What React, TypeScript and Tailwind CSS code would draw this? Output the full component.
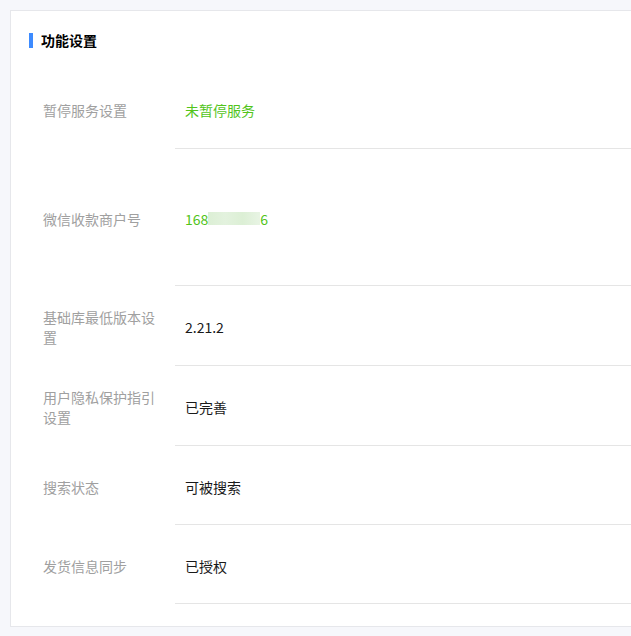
import React from "react";

type Row = {
  label: string;
  value: React.ReactNode;
  tall?: boolean;
  short?: boolean;
};

const rows: Row[] = [
  { label: "暂停服务设置", value: <span className="text-[#52c41a]">未暂停服务</span> },
  {
    label: "微信收款商户号",
    tall: true,
    value: (
      <span className="text-[#52c41a] flex items-center">
        168
        <span className="inline-block w-[52px] h-[13px] bg-[linear-gradient(90deg,#dcefd5,#e3f2de,#dcefd5,#e8f4e4)]" />
        6
      </span>
    ),
  },
  { label: "基础库最低版本设置", value: "2.21.2" },
  { label: "用户隐私保护指引设置", value: "已完善" },
  { label: "搜索状态", value: "可被搜索", short: true },
  { label: "发货信息同步", value: "已授权", short: true },
];

export default function App() {
  return (
    <div
      className="min-h-[636px] bg-[#f6f7fb] pt-[10px] pl-[10px] pb-[9px]"
      style={{ fontFamily: '"Microsoft YaHei", "Noto Sans CJK SC", sans-serif' }}
    >
      <div className="bg-white border-t border-l border-b border-[#e6e7eb] pl-[18px] pt-[21px] pb-[22px]">
        {/* title */}
        <div className="flex items-center h-[16px]">
          <span className="w-[4px] h-[15px] bg-[#3d8bff]" />
          <span className="ml-[8px] text-[14px] font-bold text-black leading-none">功能设置</span>
        </div>

        <div className="mt-[21px]">
          {rows.map((r) => (
            <div key={r.label} className="flex">
              <div className={`w-[146px] pl-[14px] shrink-0 pt-[21px] ${r.short ? "pb-[18px]" : "pb-[19px]"}`}>
                <div
                  className={`w-[120px] flex items-center text-[14px] leading-[20px] text-[#a0a0a0] ${
                    r.tall ? "min-h-[97px]" : "min-h-[40px]"
                  }`}
                >
                  {r.label}
                </div>
              </div>
              <div
                className={`flex-1 border-b border-[#e5e5e5] pl-[10px] pt-[21px] ${r.short ? "pb-[17px]" : "pb-[18px]"}`}
              >
                <div
                  className={`flex items-center text-[14px] leading-[20px] text-[#1a1a1a] ${
                    r.tall ? "min-h-[97px]" : "min-h-[40px]"
                  }`}
                >
                  {r.value}
                </div>
              </div>
            </div>
          ))}
        </div>
      </div>
    </div>
  );
}
